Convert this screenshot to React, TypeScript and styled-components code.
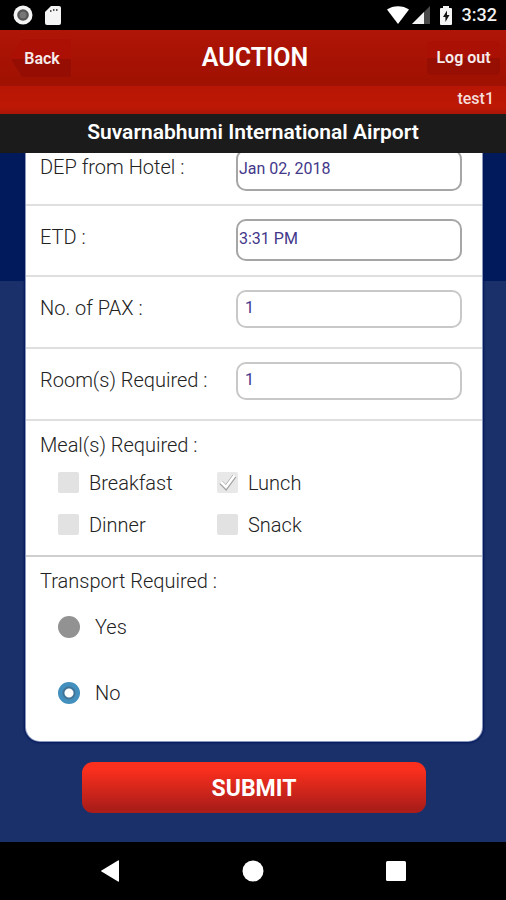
import React, { useState } from "react";
import styled, { createGlobalStyle } from "styled-components";

const GlobalStyle = createGlobalStyle`
  *, *::before, *::after { box-sizing: border-box; }
  body { margin: 0; background: #000; font-family: Roboto, "Liberation Sans", sans-serif; }
  button, input { font-family: inherit; }
`;

const Screen = styled.div`
  display: flex;
  flex-direction: column;
  height: 100vh;
  min-height: 600px;
  overflow: hidden;
`;

const StatusBar = styled.div`
  display: flex;
  align-items: center;
  justify-content: space-between;
  flex: none;
  height: 30px;
  padding: 0 9px 0 13px;
  background: #000;
  color: #f2f2f2;
`;

const StatusGroup = styled.div<{ $gap: number }>`
  display: flex;
  align-items: center;
  gap: ${(p) => p.$gap}px;
`;

const Clock = styled.time`
  margin-left: 6px;
  font-size: 18px;
  font-weight: 500;
  line-height: 30px;
`;

const Header = styled.header`
  display: grid;
  grid-template-columns: 1fr auto 1fr;
  align-items: center;
  flex: none;
  height: 56px;
  padding: 0 6px 0 10px;
  background: linear-gradient(#b01506, #a51203 60%, #9f1102);
`;

const Title = styled.h1`
  margin: 0;
  color: #fff;
  font-size: 25px;
  font-weight: 600;
  line-height: 54px;
`;

const BackButton = styled.button`
  justify-self: start;
  width: 61px;
  height: 38px;
  padding: 0 0 0 3px;
  border: 0;
  background: linear-gradient(#ac0f04 52%, #960e03 52%);
  clip-path: polygon(0 50%, 12px 0, 100% 0, 100% 100%, 12px 100%);
  color: #f6eceb;
  font-size: 16px;
  font-weight: 600;
`;

const LogoutButton = styled.button`
  justify-self: end;
  width: 73px;
  height: 34px;
  padding: 0 0 2px;
  border: 0;
  border-radius: 4px;
  background: linear-gradient(#ab1005 50%, #970e03 50%);
  color: #f6eceb;
  font-size: 16px;
  font-weight: 600;
`;

const UserStrip = styled.div`
  flex: none;
  height: 28px;
  padding-right: 12px;
  background: linear-gradient(#b81605, #bd1805 75%, #a81506);
  color: #f6dedb;
  font-size: 16px;
  font-weight: 500;
  line-height: 25px;
  text-align: right;
`;

const AirportBar = styled.h2`
  flex: none;
  height: 39px;
  margin: 0;
  background: #1b1b1b;
  color: #fff;
  font-size: 21px;
  font-weight: 600;
  line-height: 37px;
  text-align: center;
`;

const Main = styled.main`
  display: flex;
  flex: 1;
  flex-direction: column;
  justify-content: flex-end;
  min-height: 0;
  overflow: hidden;
  padding: 0 24px 29px 26px;
  background: linear-gradient(#001a5c 128px, #1a306b 128px);
`;

const Form = styled.form`
  display: flex;
  flex-direction: column;
  align-items: center;
  gap: 21px;
`;

const Card = styled.div`
  width: 100%;
  overflow: hidden;
  border-radius: 0 0 14px 14px;
  background: #fff;
  box-shadow: 0 0 0 1px #8b98bd, 0 0 2px 2px #03185a;
  color: #222;
  font-size: 20px;
  font-weight: 300;
`;

const Row = styled.div<{ $height: number }>`
  display: grid;
  grid-template-columns: 196px 1fr;
  align-items: start;
  min-height: ${(p) => p.$height}px;
  padding: 13px 20px 13px 14px;
  border-bottom: 2px solid #dfdfdf;
`;

const Label = styled.label`
  line-height: 36px;
`;

const Field = styled.input<{ $tall?: boolean }>`
  width: 100%;
  height: ${(p) => (p.$tall ? 42 : 38)}px;
  padding: ${(p) => (p.$tall ? "0 1px 3px" : "0 7px 3px")};
  border: 2px solid ${(p) => (p.$tall ? "#a6a6a6" : "#c8c8c8")};
  border-radius: 10px;
  outline: 0;
  background: #fff;
  color: #43388a;
  font-size: 16px;
`;

const Group = styled.fieldset<{ $divided?: boolean }>`
  min-width: 0;
  margin: 0;
  padding: 12px 14px;
  border: 0;
  border-bottom: ${(p) => (p.$divided ? "2px solid #cfcfcf" : "0")};
`;

const Legend = styled.legend`
  float: left;
  width: 100%;
  padding: 0;
  line-height: 24px;
`;

const MealGrid = styled.div`
  clear: both;
  display: grid;
  grid-template-columns: 159px 159px;
  margin-bottom: -3px;
  padding: 5px 0 0 18px;
`;

const RadioList = styled.div`
  clear: both;
  display: grid;
  gap: 24px;
  padding: 13px 0 15px 18px;
`;

const Option = styled.label<{ $gap: number }>`
  display: flex;
  align-items: center;
  gap: ${(p) => p.$gap}px;
  height: 42px;
`;

const Tick = styled.input`
  appearance: none;
  flex: none;
  width: 21px;
  height: 21px;
  margin: 0 0 2px;
  border-radius: 2px;
  background: #e2e2e2;

  &:checked {
    background: #e8e8e8
      url("data:image/svg+xml,%3Csvg xmlns='http://www.w3.org/2000/svg' viewBox='0 0 21 21'%3E%3Cpath d='M4 10.5l5 5L17.5 4' fill='none' stroke='%23a3a3a3' stroke-width='4.5'/%3E%3Cpath d='M4 10l5 5L17.5 3.5' fill='none' stroke='%23fff' stroke-width='2.6'/%3E%3C/svg%3E")
      center / 21px 21px;
  }
`;

const Radio = styled.input`
  appearance: none;
  flex: none;
  width: 22px;
  height: 22px;
  margin: 0;
  border-radius: 50%;
  background: #929292;

  &:checked {
    background: radial-gradient(circle, #fff 0 4px, #417498 5px 6px, #438fbd 7px);
  }
`;

const Submit = styled.button`
  width: 76%;
  max-width: 344px;
  height: 51px;
  padding: 2px 0 0;
  border: 0;
  border-radius: 11px;
  background: linear-gradient(#fa2f1d 15%, #ac1d19 92%);
  color: #fff;
  font-size: 23px;
  font-weight: 700;
`;

const NavBar = styled.nav`
  display: flex;
  align-items: center;
  justify-content: center;
  gap: 113px;
  flex: none;
  height: 58px;
  background: #000;
`;

const NavButton = styled.button`
  display: flex;
  justify-content: center;
  width: 30px;
  padding: 0;
  border: 0;
  background: none;
`;

const meals = ["Breakfast", "Lunch", "Dinner", "Snack"];

export default function App() {
  const [chosen, setChosen] = useState<string[]>(["Lunch"]);
  const [transport, setTransport] = useState("No");

  const toggle = (meal: string) =>
    setChosen((list) => (list.includes(meal) ? list.filter((m) => m !== meal) : [...list, meal]));

  return (
    <Screen>
      <GlobalStyle />
      <StatusBar>
        <StatusGroup $gap={12}>
          <svg width="20" height="20" viewBox="0 0 20 20" aria-hidden="true">
            <circle cx="10" cy="10" r="9.5" fill="#f5f5f5" />
            <circle cx="10" cy="10" r="5.8" fill="#555" />
            <circle cx="10" cy="10" r="3.5" fill="#777" />
          </svg>
          <svg width="16" height="19" viewBox="0 0 16 19" aria-hidden="true">
            <path d="M6 0h8a2 2 0 0 1 2 2v15a2 2 0 0 1-2 2H2a2 2 0 0 1-2-2V6z" fill="#f5f5f5" />
            <path d="M5 4h1.5v2H5zM8 3h1.5v2H8zM11 3h1.5v2H11z" fill="#555" />
          </svg>
        </StatusGroup>
        <StatusGroup $gap={3}>
          <svg width="22" height="18" viewBox="0 0 22 18" aria-hidden="true">
            <path d="M0 3.5C6-1 16-1 22 3.5L11 18z" fill="#fff" />
          </svg>
          <svg width="18" height="18" viewBox="0 0 18 18" aria-hidden="true">
            <path d="M18 0v18H0z" fill="#4a4a4a" />
            <path d="M12 6v12H0z" fill="#f5f5f5" />
          </svg>
          <svg width="20" height="19" viewBox="-7 0 20 19" aria-hidden="true">
            <path d="M3 0h6v2h2a1 1 0 0 1 1 1v15a1 1 0 0 1-1 1H1a1 1 0 0 1-1-1V3a1 1 0 0 1 1-1h2z" fill="#f5f5f5" />
            <path d="M7 4.5L3 11h2.4v5L9.5 9H7z" fill="#111" />
          </svg>
          <Clock>3:32</Clock>
        </StatusGroup>
      </StatusBar>
      <Header>
        <BackButton type="button">Back</BackButton>
        <Title>AUCTION</Title>
        <LogoutButton type="button">Log out</LogoutButton>
      </Header>
      <UserStrip>test1</UserStrip>
      <AirportBar>Suvarnabhumi International Airport</AirportBar>
      <Main>
        <Form onSubmit={(e) => e.preventDefault()}>
          <Card>
            <Row $height={70}>
              <Label htmlFor="departure">DEP from Hotel :</Label>
              <Field id="departure" $tall defaultValue="Jan 02, 2018" />
            </Row>
            <Row $height={71}>
              <Label htmlFor="etd">ETD :</Label>
              <Field id="etd" $tall defaultValue="3:31 PM" />
            </Row>
            <Row $height={72}>
              <Label htmlFor="pax">No. of PAX :</Label>
              <Field id="pax" inputMode="numeric" defaultValue="1" />
            </Row>
            <Row $height={72}>
              <Label htmlFor="rooms">Room(s) Required :</Label>
              <Field id="rooms" inputMode="numeric" defaultValue="1" />
            </Row>
            <Group $divided>
              <Legend>Meal(s) Required :</Legend>
              <MealGrid>
                {meals.map((meal) => (
                  <Option key={meal} $gap={10}>
                    <Tick type="checkbox" checked={chosen.includes(meal)} onChange={() => toggle(meal)} />
                    {meal}
                  </Option>
                ))}
              </MealGrid>
            </Group>
            <Group>
              <Legend>Transport Required :</Legend>
              <RadioList>
                {["Yes", "No"].map((answer) => (
                  <Option key={answer} $gap={15}>
                    <Radio
                      type="radio"
                      name="transport"
                      checked={transport === answer}
                      onChange={() => setTransport(answer)}
                    />
                    {answer}
                  </Option>
                ))}
              </RadioList>
            </Group>
          </Card>
          <Submit type="submit">SUBMIT</Submit>
        </Form>
      </Main>
      <NavBar>
        <NavButton type="button" aria-label="Back">
          <svg width="18" height="22" viewBox="0 0 18 22">
            <path d="M18 1v20q0 1-1 .5L.5 11.5q-.8-.5 0-1L17 .5q1-.5 1 .5z" fill="#fff" />
          </svg>
        </NavButton>
        <NavButton type="button" aria-label="Home">
          <svg width="22" height="22" viewBox="0 0 22 22">
            <circle cx="11" cy="11" r="10.5" fill="#fff" />
          </svg>
        </NavButton>
        <NavButton type="button" aria-label="Recent apps">
          <svg width="20" height="20" viewBox="0 0 20 20">
            <rect width="20" height="20" rx="1.5" fill="#fff" />
          </svg>
        </NavButton>
      </NavBar>
    </Screen>
  );
}
